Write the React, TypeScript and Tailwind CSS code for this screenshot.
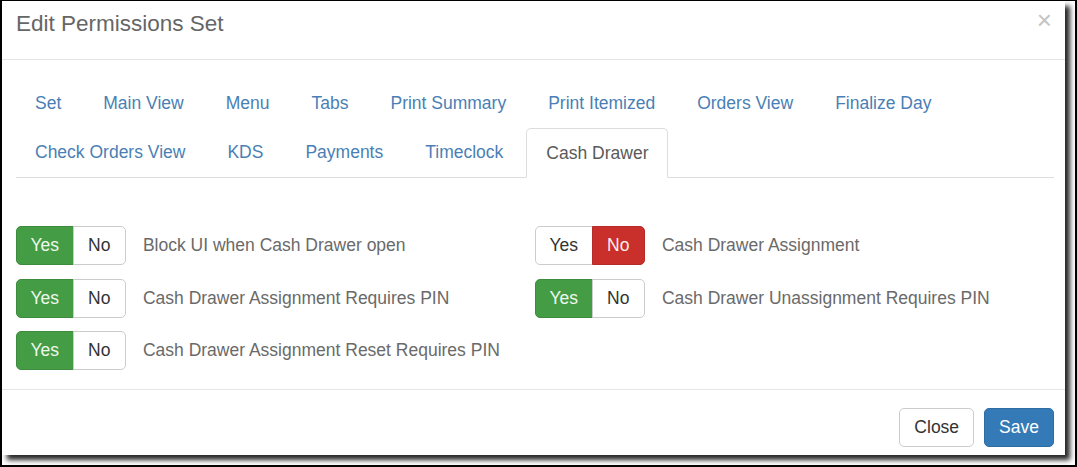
import React from "react";

const tabsRow = [
  "Set",
  "Main View",
  "Menu",
  "Tabs",
  "Print Summary",
  "Print Itemized",
  "Orders View",
  "Finalize Day",
  "Check Orders View",
  "KDS",
  "Payments",
  "Timeclock",
  "Cash Drawer",
];

type Opt = { label: string; yes: boolean };

const left: Opt[] = [
  { label: "Block UI when Cash Drawer open", yes: true },
  { label: "Cash Drawer Assignment Requires PIN", yes: true },
  { label: "Cash Drawer Assignment Reset Requires PIN", yes: true },
];
const right: Opt[] = [
  { label: "Cash Drawer Assignment", yes: false },
  { label: "Cash Drawer Unassignment Requires PIN", yes: true },
];

function Toggle({ yes }: { yes: boolean }) {
  return (
    <div className="flex h-[39px] text-[17.5px] leading-[25px]">
      <div
        className={
          yes
            ? "flex items-center px-[13.5px] rounded-l-[5px] border border-[#3d8c3d] bg-[#449d44] text-[#eef7ee]"
            : "flex items-center px-[13.5px] rounded-l-[5px] border border-[#cccccc] bg-white text-[#333]"
        }
      >
        Yes
      </div>
      <div
        className={
          !yes
            ? "flex items-center px-[14.5px] -ml-px rounded-r-[5px] border border-[#b52b27] bg-[#c9302c] text-[#fbeeee]"
            : "flex items-center px-[14.5px] -ml-px rounded-r-[5px] border border-[#cccccc] bg-white text-[#333]"
        }
      >
        No
      </div>
    </div>
  );
}

function Row({ o }: { o: Opt }) {
  return (
    <div className="flex items-center h-[39px]">
      <Toggle yes={o.yes} />
      <span className="ml-[17px] text-[17.5px] text-[#6a6a6a]">{o.label}</span>
    </div>
  );
}

export default function App() {
  return (
    <div
      className="w-[1077px] h-[467px] bg-white border-l-2 border-t border-r-2 border-b-2 border-black overflow-hidden"
      style={{ fontFamily: '"Liberation Sans", Arial, sans-serif' }}
    >
      <div className="w-[1063px] bg-white shadow-[5px_5px_5px_rgba(0,0,0,0.85)]">
        {/* header */}
        <div className="h-[59px] border-b border-[#e5e5e5] flex items-start justify-between pl-[14px] pr-[13px] pt-[7px]">
          <h4 className="text-[22.5px] leading-[32px] text-[#666]">Edit Permissions Set</h4>
          <span className="text-[26px] leading-[26px] font-normal text-[#c4c4c4] -mt-[1px]">×</span>
        </div>
        {/* body */}
        <div className="pl-[14px] pr-[11px] pt-[19px] pb-[19px]">
          <ul className="flex flex-wrap border-b border-[#dddddd] text-[17.5px] leading-[25px]">
            {tabsRow.map((t) => {
              const active = t === "Cash Drawer";
              return (
                <li
                  key={t}
                  className={
                    active
                      ? "relative -mb-px h-[50px] mr-[4px] px-[19px] flex items-center bg-white border border-[#dddddd] border-b-white rounded-t-[5px] text-[#5a5a5a]"
                      : "h-[49px] mr-[4px] px-[18px] flex items-center text-[#4a7fb5] border border-transparent"
                  }
                >
                  {t}
                </li>
              );
            })}
          </ul>
          <div className="pt-[48px] grid grid-cols-2 gap-y-[13.5px]">
            <Row o={left[0]} />
            <Row o={right[0]} />
            <Row o={left[1]} />
            <Row o={right[1]} />
            <Row o={left[2]} />
          </div>
        </div>
        {/* footer */}
        <div className="border-t border-[#e5e5e5] pt-[18px] pb-[8px] pr-[11px] flex justify-end gap-[10px] text-[17.5px] leading-[25px]">
          <button className="h-[39px] px-[14px] border border-[#cccccc] rounded-[5px] bg-white text-[#333]">
            Close
          </button>
          <button className="h-[39px] px-[14px] border border-[#2e6da4] rounded-[5px] bg-[#337ab7] text-white">
            Save
          </button>
        </div>
      </div>
    </div>
  );
}
